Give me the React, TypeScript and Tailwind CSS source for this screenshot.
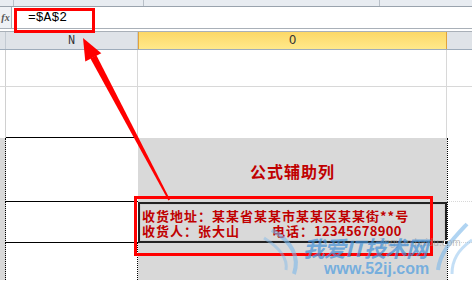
import React from 'react';

const cjk = { fontFamily: '"Noto Sans CJK SC", "Noto Sans", sans-serif' };
const mono = { fontFamily: '"Liberation Mono", "DejaVu Sans Mono", monospace' };

const Arrow: React.FC = () => (
  <svg className="absolute left-0 top-0 pointer-events-none" width="472" height="282" viewBox="0 0 472 282">
    <polygon points="83,38 85.3,61.6 101.3,53.2" fill="#ff0000" />
    <polygon points="90.4,58.5 96.4,55.3 170,199.6 168.4,200.4" fill="#ff0000" />
  </svg>
);

const Watermark: React.FC = () => (
  <div className="absolute left-[262px] top-[222px] w-[210px] h-[60px] pointer-events-none">
    <svg className="absolute left-0 top-0" width="210" height="60" viewBox="0 0 210 60">
      <path d="M10 8 C 30 20, 38 34, 32 52" stroke="#7cb8ea" strokeOpacity="0.6" strokeWidth="4" fill="none" />
      <path d="M2 16 C 18 26, 26 36, 24 48" stroke="#7cb8ea" strokeOpacity="0.45" strokeWidth="3" fill="none" />
      <path d="M205 2 C 190 18, 178 30, 176 48" stroke="#7cb8ea" strokeOpacity="0.6" strokeWidth="4" fill="none" />
      <path d="M210 18 C 196 28, 190 38, 190 52" stroke="#7cb8ea" strokeOpacity="0.45" strokeWidth="3" fill="none" />
    </svg>
    <div className="absolute left-[118px] top-[16px] text-[10px] leading-none text-[#9a9a9a]/60" style={{ fontFamily: '"Liberation Sans", sans-serif' }}>
      jingyan.baidu.com
    </div>
    <div className="absolute left-[41px] top-[14px] text-[22px] leading-none font-bold italic text-[#3f8fd8]/70 tracking-[-1px]" style={cjk}>
      我爱IT技术网
    </div>
    <div className="absolute left-[62px] top-[39px] text-[16px] leading-none font-bold text-[#4a9be0]/70" style={{ fontFamily: '"Liberation Sans", sans-serif' }}>
      www.52ij.com
    </div>
  </div>
);

export default function App() {
  return (
    <div className="relative w-[472px] h-[282px] overflow-hidden bg-white">
      {/* toolbar strip */}
      <div className="flex h-[7px] bg-[#e8ecf1] border-b border-[#9aa3ad]">
        <div className="w-[14px] border-r border-[#b9c0c8]" />
        <div className="w-[130px] border-r border-[#b9c0c8]" />
        <div className="w-[236px] border-r border-[#b9c0c8]" />
        <div className="flex-1" />
      </div>

      {/* formula bar */}
      <div className="flex h-[22px] bg-white border-b border-[#a9b0b8]">
        <div className="w-[12px] bg-[#eef1f5] border-r border-[#a9b0b8] flex items-center justify-center text-[10px] italic font-bold text-[#555]" style={{ fontFamily: '"Liberation Serif", serif' }}>
          fx
        </div>
        <div className="pl-[16px] flex items-center text-[13px] text-black" style={mono}>
          =$A$2
        </div>
      </div>
      <div className="h-[3px] bg-white border-b border-[#a9b0b8]" />

      {/* column headers */}
      <div className="flex h-[18px] bg-[#dfe3e8] border-b border-[#9eacbb] text-[12px] text-[#333]" style={mono}>
        <div className="w-[6px] border-r border-[#c3cad2]" />
        <div className="w-[132px] flex items-center justify-center border-r border-[#c3cad2]">N</div>
        <div className="w-[309px] flex items-center justify-center bg-gradient-to-b from-[#fcd867] to-[#ffe98a] border-x border-[#e2a33a]">O</div>
        <div className="flex-1" />
      </div>

      {/* row 1 */}
      <div className="flex h-[37px] border-b border-[#d8d8d8]">
        <div className="w-[6px] border-r border-[#d0d0d0]" />
        <div className="w-[132px] border-r border-[#d8d8d8]" />
        <div className="w-[309px] border-r border-[#d8d8d8]" />
        <div className="flex-1" />
      </div>

      {/* row 2 */}
      <div className="flex h-[51px]">
        <div className="w-[6px] border-r border-[#d0d0d0]" />
        <div className="w-[132px] border-r border-[#d8d8d8] border-b border-b-black" />
        <div className="w-[309px] border-r border-[#d8d8d8]" />
        <div className="flex-1" />
      </div>

      {/* row 3 */}
      <div className="flex h-[64px]">
        <div className="w-[6px] bg-[#d9d9d9] border-r border-dotted border-black" />
        <div className="w-[132px] border-b border-black" />
        <div className="w-[309px] bg-[#d9d9d9] flex items-center justify-center pt-[2px]">
          <span className="text-[16px] font-bold text-[#c00000] tracking-[1px]" style={cjk}>公式辅助列</span>
        </div>
        <div className="flex-1 border-l border-dotted border-black border-b border-b-[#d8d8d8]" />
      </div>

      {/* row 4 */}
      <div className="flex h-[41px]">
        <div className="w-[6px] bg-[#d9d9d9] border-r border-dotted border-black" />
        <div className="w-[132px] border-b border-black" />
        <div className="relative w-[309px] bg-[#d9d9d9] border-2 border-[#222]">
          <div className="h-full border border-[#cfcfcf] px-[1px] flex flex-col justify-center text-[13px] leading-[15px] font-bold text-[#c00000] tracking-[1px]" style={cjk}>
            <div>收货地址：某某省某某市某某区某某街**号</div>
            <div className="flex">
              <span className="w-[130px]">收货人：张大山</span>
              <span>电话：<span className="tracking-[0.3px]">12345678900</span></span>
            </div>
          </div>
          <div className="absolute right-[-4px] bottom-[-4px] w-[5px] h-[5px] bg-black border border-white" />
        </div>
        <div className="flex-1 border-l border-dotted border-black border-b border-b-[#d8d8d8]" />
      </div>

      {/* row 5 */}
      <div className="flex h-[37px]">
        <div className="w-[6px] bg-[#d9d9d9] border-r border-dotted border-black" />
        <div className="w-[132px] border-r border-dotted border-black" />
        <div className="w-[309px] bg-[#d9d9d9]" />
        <div className="flex-1 border-l border-dotted border-black" />
      </div>

      {/* annotations */}
      <div className="absolute left-[14px] top-[8px] w-[81px] h-[25px] border-[3px] border-[#ff0000]" />
      <div className="absolute left-[134px] top-[196px] w-[299px] h-[60px] border-[3px] border-[#ff0000]" />
      <Arrow />
      <Watermark />
    </div>
  );
}
